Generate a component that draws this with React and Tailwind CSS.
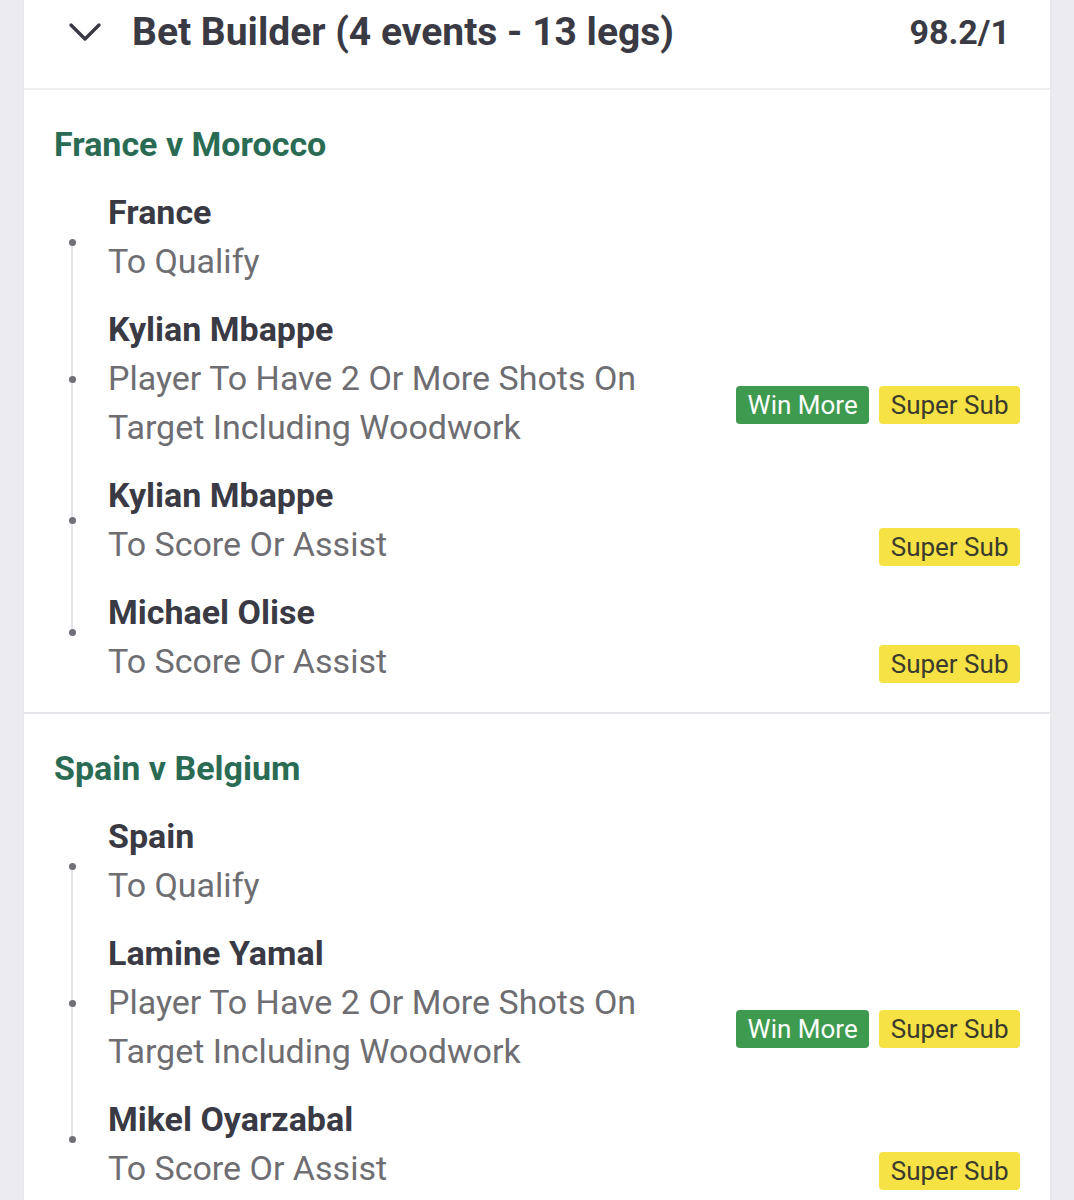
const events = [
  {
    title: 'France v Morocco',
    legs: [
      { name: 'France', lines: ['To Qualify'], badges: [] },
      { name: 'Kylian Mbappe', lines: ['Player To Have 2 Or More Shots On', 'Target Including Woodwork'], badges: ['win', 'sub'] },
      { name: 'Kylian Mbappe', lines: ['To Score Or Assist'], badges: ['sub'] },
      { name: 'Michael Olise', lines: ['To Score Or Assist'], badges: ['sub'] },
    ],
  },
  {
    title: 'Spain v Belgium',
    legs: [
      { name: 'Spain', lines: ['To Qualify'], badges: [] },
      { name: 'Lamine Yamal', lines: ['Player To Have 2 Or More Shots On', 'Target Including Woodwork'], badges: ['win', 'sub'] },
      { name: 'Mikel Oyarzabal', lines: ['To Score Or Assist'], badges: ['sub'] },
    ],
  },
]

function Badge({ kind }) {
  if (kind === 'win') {
    return (
      <span className="h-[38px] px-[11.5px] flex items-center rounded-[4px] bg-[#3d9a4f] text-white text-[26px] leading-none">
        Win More
      </span>
    )
  }
  return (
    <span className="h-[38px] px-[11.5px] flex items-center rounded-[4px] bg-[#f6e244] text-[#3b3a2e] text-[26px] leading-none">
      Super Sub
    </span>
  )
}

function Leg({ leg, first, last }) {
  return (
    <div className="flex items-stretch">
      {/* timeline */}
      <div className="w-9 flex flex-col items-center">
        <div className={'w-[2px] flex-1 ' + (first ? '' : 'bg-[#e4e4ea]')} />
        <div className="w-[7px] h-[7px] rounded-full bg-[#6f6f78] shrink-0" />
        <div className={'w-[2px] flex-1 ' + (last ? '' : 'bg-[#e4e4ea]')} />
      </div>

      <div className={'flex-1 ml-[18px] ' + (first ? 'pb-[10px]' : last ? 'pt-[9px]' : 'pt-[9px] pb-[10px]')}>
        <div className="text-[34px] leading-[49px] font-bold text-[#3a3a45]">{leg.name}</div>
        <div className="flex items-center">
          <div className="flex-1">
            <div className="max-w-[560px]">
              {leg.lines.map((l, i) => (
                <div key={i} className="text-[34px] leading-[49px] text-[#6e6e72]">{l}</div>
              ))}
            </div>
          </div>
          <div className="flex gap-[10px] pt-[4px]">
            {leg.badges.map(b => <Badge key={b} kind={b} />)}
          </div>
        </div>
      </div>
    </div>
  )
}

export default function App() {
  return (
    <div className="min-h-[1200px] bg-[#ebebf0] px-[24px] flex" style={{ fontFamily: 'Roboto, "Open Sans", sans-serif' }}>
      <div className="flex-1 bg-white shadow-[0_0_2px_rgba(0,0,0,0.06)]">
        {/* Header */}
        <div className="h-[90px] flex items-start pt-[10px] pl-[44px] pr-[40px] border-b-2 border-[#efeff1]">
          <svg width="34" height="44" viewBox="0 0 34 44" className="shrink-0">
            <path d="M3 15 L17 29 L31 15" fill="none" stroke="#3a3a45" strokeWidth="3.4" strokeLinecap="round" strokeLinejoin="round" />
          </svg>
          <div className="ml-[30px] flex-1 text-[39px] leading-[44px] font-bold text-[#3a3a45]">
            Bet Builder (4 events - 13 legs)
          </div>
          <div className="text-[34px] leading-[44px] font-bold text-[#3a3a45]">98.2/1</div>
        </div>

        {events.map((ev, ei) => (
          <div key={ei} className={'pl-[30px] pr-[30px] pt-[34px] pb-[26px] ' + (ei < events.length - 1 ? 'border-b-2 border-[#e6e6ea]' : '')}>
            <div className="text-[34px] leading-[40px] font-bold text-[#2a6b54]">{ev.title}</div>
            <div className="mt-[24px] flex flex-col">
              {ev.legs.map((leg, li) => (
                <Leg key={li} leg={leg} first={li === 0} last={li === ev.legs.length - 1} />
              ))}
            </div>
          </div>
        ))}
      </div>
    </div>
  )
}
